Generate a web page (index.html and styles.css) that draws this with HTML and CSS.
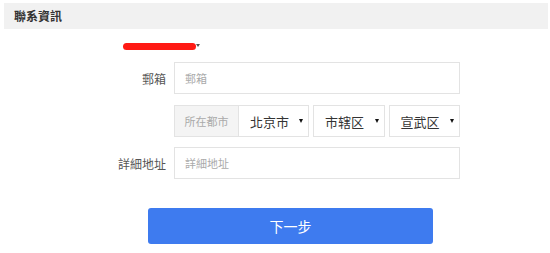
FILE: index.html
```html
<!DOCTYPE html>
<html lang="zh-Hant">
<head>
    <meta charset="utf-8" />
    <title>聯系資訊</title>
    <link rel="stylesheet" href="styles.css">
</head>
<body>
    <div class="panel-head">聯系資訊</div>
    <div class="form">
        <div class="redacted"><span class="scribble"></span><span class="tick"></span></div>
        <div class="row">
            <label class="label">郵箱</label>
            <div class="field"><input class="input" type="text" placeholder="郵箱"></div>
        </div>
        <div class="row">
            <label class="label"></label>
            <div class="field city">
                <div class="group">
                    <span class="addon">所在都市</span>
                    <div class="pick first">北京市<span class="caret"></span></div>
                </div>
                <div class="pick mid">市辖区<span class="caret"></span></div>
                <div class="pick last">宣武区<span class="caret"></span></div>
            </div>
        </div>
        <div class="row">
            <label class="label">詳細地址</label>
            <div class="field"><input class="input" type="text" placeholder="詳細地址"></div>
        </div>
        <button class="next" type="button">下一步</button>
    </div>
</body>
</html>
```

FILE: styles.css
```css
html, body {
    margin: 0;
    padding: 0;
    background: #fff;
    font-family: "Noto Sans CJK TC", "Noto Sans CJK SC", sans-serif;
    color: #333;
}

.panel-head {
    margin: 3px 2px 0 4px;
    height: 26px;
    line-height: 26px;
    padding-left: 10px;
    background: #f1f1f1;
    font-size: 12px;
    font-weight: bold;
    color: #333;
}

.form {
    padding-top: 14px;
}

.redacted {
    display: flex;
    align-items: flex-start;
    margin-left: 123px;
    height: 7px;
    margin-bottom: 12px;
}

.scribble {
    width: 73px;
    height: 7px;
    border-radius: 4px;
    background: #ff1a14;
}

.tick {
    width: 0;
    height: 0;
    margin-top: 1px;
    border-left: 2px solid transparent;
    border-right: 2px solid transparent;
    border-top: 3px solid #555;
}

.row {
    display: flex;
    align-items: center;
    height: 32px;
    margin-bottom: 11px;
}

.row:nth-of-type(3) {
    margin-bottom: 10px;
}

.label {
    width: 174px;
    padding-right: 8px;
    box-sizing: border-box;
    text-align: right;
    font-size: 12px;
    color: #555;
}

.field {
    width: 286px;
    height: 32px;
}

.input {
    width: 100%;
    height: 32px;
    box-sizing: border-box;
    border: 1px solid #e3e3e3;
    padding: 0 10px;
    font-family: inherit;
    font-size: 11px;
    outline: none;
}

.input::placeholder {
    color: #aaa;
}

.city {
    display: flex;
    gap: 4px;
}

.group {
    display: flex;
    border: 1px solid #e3e3e3;
    box-sizing: border-box;
    height: 32px;
}

.addon {
    width: 63px;
    background: #f4f4f4;
    border-right: 1px solid #e3e3e3;
    color: #aaa;
    font-size: 11px;
    line-height: 30px;
    text-align: center;
}

.pick {
    display: flex;
    align-items: center;
    justify-content: space-between;
    box-sizing: border-box;
    height: 30px;
    font-size: 13px;
    color: #333;
}

.pick.first {
    width: 69px;
    padding: 0 5px 0 11px;
}

.pick.mid,
.pick.last {
    height: 32px;
    border: 1px solid #e3e3e3;
    width: 72px;
    padding: 0 5px 0 11px;
}

.caret {
    width: 0;
    height: 0;
    border-left: 2.5px solid transparent;
    border-right: 2.5px solid transparent;
    border-top: 4px solid #111;
}

.next {
    display: block;
    margin: 29px 0 0 148px;
    width: 285px;
    height: 36px;
    border: 0;
    border-radius: 3px;
    background: #3e7bef;
    color: #fff;
    font-family: inherit;
    font-size: 14px;
}
```
